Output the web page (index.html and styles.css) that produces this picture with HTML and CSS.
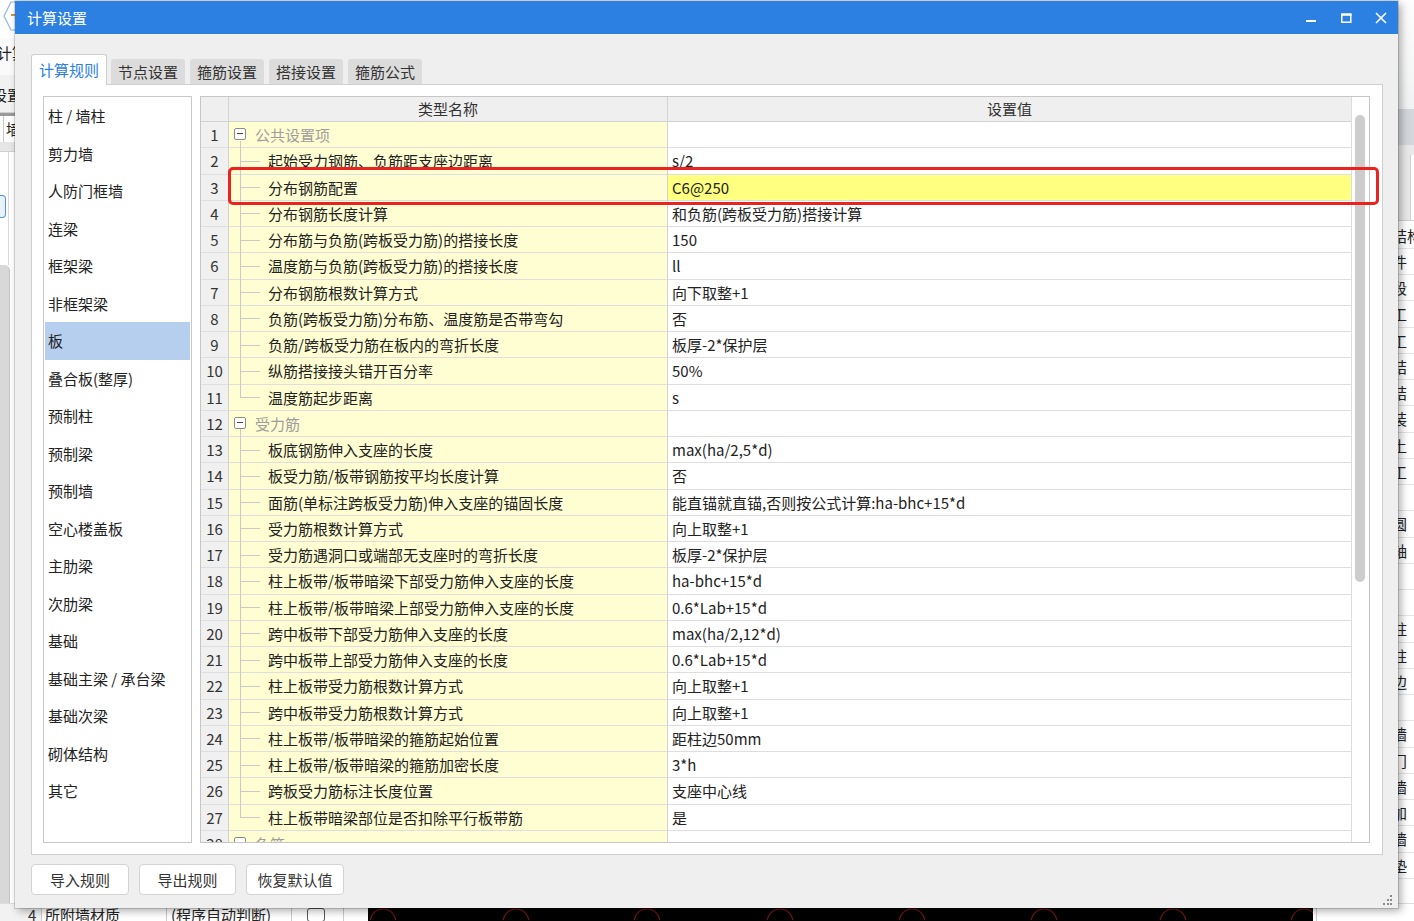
FILE: index.html
```html
<!DOCTYPE html>
<html lang="zh-CN">
<head>
<meta charset="utf-8">
<title>计算设置</title>
<link rel="stylesheet" href="styles.css">
</head>
<body>
<div class="desktop">
  <div class="app">
    <div class="app-left">
      <div class="al-top">
        <svg width="15" height="34" viewBox="0 0 15 34"><path d="M15 2 H11 L4 16 L11 30 H15" fill="none" stroke="#8fb6e6" stroke-width="1.2"/><rect x="11" y="14" width="4" height="2" fill="#e8902a"/></svg>
      </div>
      <div class="al-title">计算</div>
      <div class="al-menu">设置</div>
      <div class="al-sep"></div>
      <div class="al-tab">墙</div>
      <div class="al-band"></div>
      <div class="al-area"><div class="al-btn"></div></div>
      <div class="al-panel"></div>
    </div>
    <div class="app-right">
      <div class="ar-top"></div>
      <div class="ar-band"></div>
      <div class="ar-tabs"><div class="ar-box"></div></div>
      <div class="ar-rows">
        <div class="ar-row">结构</div><div class="ar-row">件</div><div class="ar-row">段</div><div class="ar-row">工</div><div class="ar-row">工</div>
        <div class="ar-row">结</div><div class="ar-row">结</div><div class="ar-row">装</div><div class="ar-row">土</div><div class="ar-row">工</div>
        <div class="ar-row"></div><div class="ar-row">圆</div><div class="ar-row">轴</div><div class="ar-row"></div><div class="ar-row"></div>
        <div class="ar-row">柱</div><div class="ar-row">柱</div><div class="ar-row">边</div><div class="ar-row"></div><div class="ar-row">墙</div>
        <div class="ar-row">门</div><div class="ar-row">墙</div><div class="ar-row">加</div><div class="ar-row">墙</div><div class="ar-row">垫</div>
        <div class="ar-row"></div>
      </div>
    </div>
    <div class="app-bottom">
      <div class="ab-num">4</div>
      <div class="ab-name">所附墙材质</div>
      <div class="ab-val">(程序自动判断)</div>
      <div class="ab-chk"><span></span></div>
      <div class="ab-empty"></div>
      <div class="ab-canvas">
        <svg width="945" height="16" viewBox="0 0 945 16">
          <g fill="none" stroke="#7a1414" stroke-width="1.2">
            <circle cx="15" cy="18" r="13"/><circle cx="148" cy="18" r="13"/><circle cx="279" cy="18" r="13"/><circle cx="412" cy="18" r="13"/>
            <circle cx="544" cy="18" r="13"/><circle cx="676" cy="18" r="13"/><circle cx="805" cy="18" r="13"/><circle cx="936" cy="18" r="13"/>
          </g>
        </svg>
      </div>
      <div class="ab-rest"></div>
    </div>
  </div>

  <div class="dialog">
    <div class="titlebar">
      <span class="title">计算设置</span>
      <div class="winctl">
        <span class="wbtn"><svg width="12" height="12" viewBox="0 0 12 12"><rect x="1" y="8" width="10" height="2" fill="#fff"/></svg></span>
        <span class="wbtn"><svg width="12" height="12" viewBox="0 0 12 12"><rect x="1.75" y="2.25" width="9" height="8" fill="none" stroke="#fff" stroke-width="1.5"/><rect x="1" y="1.5" width="10.5" height="2.3" fill="#fff"/></svg></span>
        <span class="wbtn"><svg width="12" height="12" viewBox="0 0 12 12"><path d="M1 1 L11 11 M11 1 L1 11" stroke="#fff" stroke-width="1.7"/></svg></span>
      </div>
    </div>
    <div class="dbody">
      <div class="tabs">
        <div class="tab active">计算规则</div>
        <div class="tab">节点设置</div>
        <div class="tab">箍筋设置</div>
        <div class="tab">搭接设置</div>
        <div class="tab">箍筋公式</div>
      </div>
      <div class="panel">
        <ul class="cats">
          <li>柱 / 墙柱</li>
          <li>剪力墙</li>
          <li>人防门框墙</li>
          <li>连梁</li>
          <li>框架梁</li>
          <li>非框架梁</li>
          <li class="sel">板</li>
          <li>叠合板(整厚)</li>
          <li>预制柱</li>
          <li>预制梁</li>
          <li>预制墙</li>
          <li>空心楼盖板</li>
          <li>主肋梁</li>
          <li>次肋梁</li>
          <li>基础</li>
          <li>基础主梁 / 承台梁</li>
          <li>基础次梁</li>
          <li>砌体结构</li>
          <li>其它</li>
        </ul>
        <div class="grid">
          <div class="gmain">
            <div class="row ghead">
              <div class="c-num"></div><div class="c-name">类型名称</div><div class="c-val">设置值</div>
            </div>
            <div class="gbody">
              <div class="row group open"><div class="c-num">1</div><div class="c-name"><span class="tog"></span>公共设置项</div><div class="c-val"></div></div>
              <div class="row child"><div class="c-num">2</div><div class="c-name">起始受力钢筋、负筋距支座边距离</div><div class="c-val">s/2</div></div>
              <div class="row child hl"><div class="c-num">3</div><div class="c-name">分布钢筋配置</div><div class="c-val">C6@250</div></div>
              <div class="row child"><div class="c-num">4</div><div class="c-name">分布钢筋长度计算</div><div class="c-val">和负筋(跨板受力筋)搭接计算</div></div>
              <div class="row child"><div class="c-num">5</div><div class="c-name">分布筋与负筋(跨板受力筋)的搭接长度</div><div class="c-val">150</div></div>
              <div class="row child"><div class="c-num">6</div><div class="c-name">温度筋与负筋(跨板受力筋)的搭接长度</div><div class="c-val">ll</div></div>
              <div class="row child"><div class="c-num">7</div><div class="c-name">分布钢筋根数计算方式</div><div class="c-val">向下取整+1</div></div>
              <div class="row child"><div class="c-num">8</div><div class="c-name">负筋(跨板受力筋)分布筋、温度筋是否带弯勾</div><div class="c-val">否</div></div>
              <div class="row child"><div class="c-num">9</div><div class="c-name">负筋/跨板受力筋在板内的弯折长度</div><div class="c-val">板厚-2*保护层</div></div>
              <div class="row child"><div class="c-num">10</div><div class="c-name">纵筋搭接接头错开百分率</div><div class="c-val">50%</div></div>
              <div class="row child last"><div class="c-num">11</div><div class="c-name">温度筋起步距离</div><div class="c-val">s</div></div>
              <div class="row group open"><div class="c-num">12</div><div class="c-name"><span class="tog"></span>受力筋</div><div class="c-val"></div></div>
              <div class="row child"><div class="c-num">13</div><div class="c-name">板底钢筋伸入支座的长度</div><div class="c-val">max(ha/2,5*d)</div></div>
              <div class="row child"><div class="c-num">14</div><div class="c-name">板受力筋/板带钢筋按平均长度计算</div><div class="c-val">否</div></div>
              <div class="row child"><div class="c-num">15</div><div class="c-name">面筋(单标注跨板受力筋)伸入支座的锚固长度</div><div class="c-val">能直锚就直锚,否则按公式计算:ha-bhc+15*d</div></div>
              <div class="row child"><div class="c-num">16</div><div class="c-name">受力筋根数计算方式</div><div class="c-val">向上取整+1</div></div>
              <div class="row child"><div class="c-num">17</div><div class="c-name">受力筋遇洞口或端部无支座时的弯折长度</div><div class="c-val">板厚-2*保护层</div></div>
              <div class="row child"><div class="c-num">18</div><div class="c-name">柱上板带/板带暗梁下部受力筋伸入支座的长度</div><div class="c-val">ha-bhc+15*d</div></div>
              <div class="row child"><div class="c-num">19</div><div class="c-name">柱上板带/板带暗梁上部受力筋伸入支座的长度</div><div class="c-val">0.6*Lab+15*d</div></div>
              <div class="row child"><div class="c-num">20</div><div class="c-name">跨中板带下部受力筋伸入支座的长度</div><div class="c-val">max(ha/2,12*d)</div></div>
              <div class="row child"><div class="c-num">21</div><div class="c-name">跨中板带上部受力筋伸入支座的长度</div><div class="c-val">0.6*Lab+15*d</div></div>
              <div class="row child"><div class="c-num">22</div><div class="c-name">柱上板带受力筋根数计算方式</div><div class="c-val">向上取整+1</div></div>
              <div class="row child"><div class="c-num">23</div><div class="c-name">跨中板带受力筋根数计算方式</div><div class="c-val">向上取整+1</div></div>
              <div class="row child"><div class="c-num">24</div><div class="c-name">柱上板带/板带暗梁的箍筋起始位置</div><div class="c-val">距柱边50mm</div></div>
              <div class="row child"><div class="c-num">25</div><div class="c-name">柱上板带/板带暗梁的箍筋加密长度</div><div class="c-val">3*h</div></div>
              <div class="row child"><div class="c-num">26</div><div class="c-name">跨板受力筋标注长度位置</div><div class="c-val">支座中心线</div></div>
              <div class="row child last"><div class="c-num">27</div><div class="c-name">柱上板带暗梁部位是否扣除平行板带筋</div><div class="c-val">是</div></div>
              <div class="row group open"><div class="c-num">28</div><div class="c-name"><span class="tog"></span>负筋</div><div class="c-val"></div></div>
            </div>
          </div>
          <div class="vscroll"><div class="thumb"></div></div>
          <div class="mark"></div>
        </div>
      </div>
      <div class="actions">
        <button class="btn">导入规则</button>
        <button class="btn narrow">导出规则</button>
        <button class="btn">恢复默认值</button>
      </div>
    </div>
    <svg class="grip" width="10" height="10" viewBox="0 0 10 10">
      <g fill="#8a8a8a"><rect x="8" y="0" width="2" height="2"/><rect x="5" y="4" width="2" height="2"/><rect x="8" y="4" width="2" height="2"/><rect x="1" y="8" width="2" height="2"/><rect x="5" y="8" width="2" height="2"/><rect x="8" y="8" width="2" height="2"/></g>
    </svg>
  </div>
</div>
</body>
</html>
```

FILE: styles.css
```css
* { box-sizing: border-box; }
html, body { margin: 0; padding: 0; }
body {
  width: 1414px;
  height: 921px;
  overflow: hidden;
  background: #fff;
  font-family: "Noto Sans CJK SC", "Microsoft YaHei", sans-serif;
  font-size: 15px;
  color: #222;
}
.desktop { position: relative; width: 1414px; height: 921px; }

/* ---------- background application (partly hidden) ---------- */
.app { position: absolute; left: 0; top: 0; width: 1414px; height: 921px; background: #fff; }
.app-left { position: absolute; left: 0; top: 0; width: 15px; height: 905px; display: flex; flex-direction: column; overflow: hidden; background: #fff; }
.al-top { height: 38px; background: #fff; }
.al-top svg { display: block; }
.al-title { height: 37px; line-height: 30px; margin-left: -3px; white-space: nowrap; color: #222; background: #fafafa; }
.al-menu { height: 37px; line-height: 40px; margin-left: -8px; white-space: nowrap; color: #222; background: #f1f1f1; }
.al-sep { height: 4px; background: #9a9a9a; border-top: 1px solid #cfcfcf; }
.al-tab { height: 26px; line-height: 26px; margin-left: 3px; padding-left: 2px; white-space: nowrap; background: #fff; border-left: 1px solid #c9c9c9; color: #222; }
.al-band { height: 10px; background: #e6e6e6; border-bottom: 1px solid #d0d0d0; }
.al-area { height: 113px; background: #fff; border-right: 1px solid #d8d8d8; margin-right: 6px; padding-top: 43px; }
.al-btn { width: 6px; height: 23px; border: 1px solid #4f97e2; border-left: 0; border-radius: 0 4px 4px 0; background: #eaf3fd; }
.al-panel { flex: 1; margin-right: 5px; background: #d8d8d8; border-radius: 0 6px 0 0; border-right: 1px solid #c4c4c4; }

.app-right { position: absolute; left: 1380px; top: 0; width: 34px; height: 905px; display: flex; flex-direction: column; overflow: hidden; }
.ar-top { height: 112px; background: linear-gradient(#fdfdfd, #f1f2f3); }
.ar-band { height: 38px; background: #d3d6da; border-top: 1px solid #eef0f2; }
.ar-tabs { height: 78px; background: #e8e8e8; padding: 10px 0 0 30px; border-bottom: 1px solid #cfcfcf; }
.ar-box { height: 65px; background: #fff; border-left: 1px solid #cfcfcf; }
.ar-rows { flex: 1; background: #fff; padding-top: 2px; }
.ar-row { height: 26.25px; line-height: 25.25px; padding-left: 12px; white-space: nowrap; border-bottom: 1px solid #e4e4e4; color: #222; }

.app-bottom { position: absolute; left: 0; top: 903px; width: 1414px; height: 18px; display: flex; background: #fff; border-top: 1px solid #ddd; }
.app-bottom > div { height: 18px; line-height: 22px; white-space: nowrap; overflow: hidden; }
.ab-num { width: 42px; padding-left: 28px; border-right: 1px solid #ccc; background: #f2f2f2; color: #333; }
.ab-name { width: 125px; padding-left: 3px; border-right: 1px solid #ccc; }
.ab-val { width: 125px; padding-left: 4px; border-right: 1px solid #ccc; }
.ab-chk { width: 52px; padding: 4px 0 0 15px; border-right: 1px solid #ccc; }
.ab-chk span { display: block; width: 18px; height: 14px; border: 1px solid #555; border-radius: 3px; background: #fff; }
.ab-empty { width: 24px; }
.ab-canvas { width: 945px; background: #000; }
.ab-canvas svg { display: block; }
.ab-rest { flex: 1; border-left: 1px solid #ccc; margin-left: 3px; }

/* ---------- dialog window ---------- */
.dialog {
  position: absolute;
  left: 15px;
  top: 1px;
  width: 1383px;
  height: 907px;
  background: #efefef;
  display: flex;
  flex-direction: column;
  box-shadow: 0 0 0 1px rgba(0,0,0,0.14), 3px 3px 8px rgba(0,0,0,0.32);
}
.titlebar {
  height: 33px;
  flex: none;
  background: #2b80e2;
  color: #fff;
  display: flex;
  align-items: center;
  padding-left: 12px;
}
.title { flex: 1; font-size: 15px; line-height: 33px; }
.winctl { display: flex; height: 33px; }
.wbtn { width: 35px; height: 33px; display: flex; align-items: center; justify-content: center; }
.wbtn svg { display: block; }

.dbody { flex: 1; display: flex; flex-direction: column; padding: 20px 15px 0 16px; }

.tabs { height: 30px; display: flex; align-items: flex-end; flex: none; }
.tab {
  width: 74px;
  height: 25px;
  margin-right: 5px;
  background: #dcdcdc;
  color: #333;
  text-align: center;
  line-height: 25px;
  border-radius: 3px 3px 0 0;
  white-space: nowrap;
}
.tab.active {
  width: 76px;
  height: 31px;
  margin-right: 4px;
  margin-bottom: -1px;
  background: #fff;
  color: #2b80e2;
  border: 1px solid #cfcfcf;
  border-bottom: 0;
  line-height: 29px;
  position: relative;
  z-index: 1;
}

.panel {
  height: 771px;
  flex: none;
  background: #fff;
  border: 1px solid #cfcfcf;
  padding: 11px 12px 11px 11px;
  display: flex;
  gap: 8px;
}

.cats {
  width: 149px;
  height: 747px;
  margin: 0;
  padding: 0 1px;
  list-style: none;
  border: 1px solid #c8c8c8;
  background: #fff;
  flex: none;
}
.cats li {
  height: 37.5px;
  line-height: 37.5px;
  padding-left: 3px;
  white-space: nowrap;
  color: #222;
}
.cats li.sel { background: #b6cfee; }

.grid {
  width: 1170px;
  height: 747px;
  border: 1px solid #c6c6c6;
  position: relative;
  display: flex;
  flex: none;
  background: #fff;
}
.gmain { width: 1150px; display: flex; flex-direction: column; overflow: hidden; }
.row {
  display: grid;
  grid-template-columns: 28px 439px 683px;
  height: 26.25px;
  flex: none;
}
.row > div {
  border-bottom: 1px solid #dedede;
  line-height: 25.25px;
  white-space: nowrap;
  overflow: visible;
}
.c-num { background: #f0f0f0; border-right: 1px solid #d2d2d2; text-align: center; color: #333; }
.c-name { background: #fffed3; border-right: 1px solid #d2d2d2; position: relative; padding-left: 39px; color: #222; }
.c-val { background: #fff; padding-left: 4px; color: #222; }

.ghead { height: 25px; }
.ghead > div { background: #efefef; line-height: 24px; text-align: center; color: #333; padding-left: 0; border-bottom: 1px solid #d2d2d2; }

.gbody { flex: 1; overflow: hidden; }

.row.group .c-name { padding-left: 26px; color: #9d9d9d; }
.row.hl .c-val { background: #ffff80; }

.tog {
  position: absolute;
  left: 5px;
  top: 50%;
  margin-top: -6.5px;
  width: 12px;
  height: 12px;
  border: 1px solid #8c8c8c;
  border-radius: 2px;
  background: #fff;
}
.tog::after {
  content: "";
  position: absolute;
  left: 2px;
  right: 2px;
  top: 4px;
  border-top: 1px solid #444;
}
.row.group.open .c-name::before {
  content: "";
  position: absolute;
  left: 11px;
  top: calc(50% + 6px);
  bottom: -1px;
  border-left: 1px solid #c9c9c9;
}
.row.child .c-name::before {
  content: "";
  position: absolute;
  left: 11px;
  top: 0;
  bottom: -1px;
  border-left: 1px solid #c9c9c9;
}
.row.child.last .c-name::before { bottom: 50%; }
.row.child .c-name::after {
  content: "";
  position: absolute;
  left: 11px;
  top: 50%;
  width: 20px;
  border-top: 1px solid #c9c9c9;
}

.vscroll { width: 18px; border-left: 1px solid #dcdcdc; background: #fff; flex: none; }
.thumb { width: 10px; height: 467px; margin: 18px 0 0 3px; background: #cdcdcd; border-radius: 5px; }

.mark {
  position: absolute;
  left: 27px;
  top: 70px;
  width: 1151px;
  height: 38px;
  border: 3px solid #ea2320;
  border-radius: 5px;
  pointer-events: none;
  z-index: 2;
}

.actions { display: flex; gap: 10px; margin-top: 9px; height: 31px; flex: none; }
.btn {
  width: 98px;
  height: 31px;
  padding: 0;
  background: #fff;
  border: 1px solid #d3d3d3;
  border-radius: 4px;
  font-family: "Noto Sans CJK SC", "Microsoft YaHei", sans-serif;
  font-size: 15px;
  color: #333;
  line-height: 29px;
}
.btn.narrow { width: 97px; }

.grip { position: absolute; right: 6px; bottom: 3px; display: block; }
```
